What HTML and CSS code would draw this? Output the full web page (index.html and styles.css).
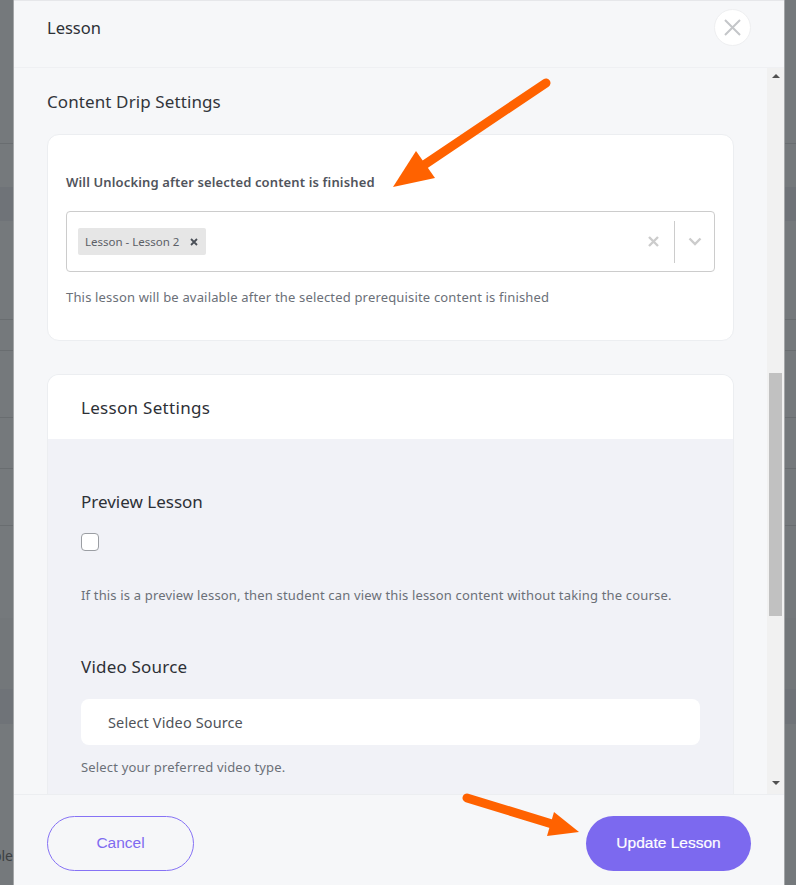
FILE: index.html
```html
<!DOCTYPE html>
<html lang="en">

<head>
	<meta charset="UTF-8">
	<title>Lesson</title>
	<link rel="stylesheet" href="styles.css">
</head>

<body>
	<!-- page behind the dialog, only the edges show -->
	<div class="backdrop">
		<div class="stripe stripe-a"></div>
		<div class="stripe stripe-b"></div>
		<div class="stripe stripe-c"></div>
		<div class="stripe stripe-d"></div>
		<div class="stripe stripe-e"></div>
		<div class="stripe stripe-f"></div>
		<div class="stripe stripe-g"></div>
		<div class="stripe stripe-h"></div>
		<div class="stripe stripe-i"></div>
		<div class="stripe stripe-j"></div>
		<div class="stripe stripe-k"></div>
		<div class="stripe stripe-l"><span class="cut-text">ble</span></div>
	</div>

	<div class="modal">
		<header class="modal-header">
			<h2>Lesson</h2>
			<button class="close-button" aria-label="Close">
				<svg width="19" height="19" viewBox="0 0 19 19"><path d="M2 2L17 17M17 2L2 17" stroke="#c4c6c9" stroke-width="2" fill="none" /></svg>
			</button>
		</header>

		<div class="modal-middle">
			<div class="modal-body">
				<h3 class="section-title">Content Drip Settings</h3>
				<div class="drip-card">
					<label class="drip-label">Will Unlocking after selected content is finished</label>
					<div class="multi-select">
						<span class="tag">Lesson - Lesson 2
							<svg width="8" height="8" viewBox="0 0 8 8"><path d="M1 1L7 7M7 1L1 7" stroke="#4a4f57" stroke-width="1.8" fill="none" /></svg>
						</span>
						<span class="select-clear">
							<svg width="11" height="11" viewBox="0 0 11 11"><path d="M1 1L10 10M10 1L1 10" stroke="#cccccc" stroke-width="2.4" fill="none" /></svg>
						</span>
						<span class="select-sep"></span>
						<span class="select-arrow">
							<svg width="14" height="9" viewBox="0 0 14 9"><path d="M1.5 1.5L7 7L12.5 1.5" stroke="#cccccc" stroke-width="2.4" fill="none" /></svg>
						</span>
					</div>
					<p class="help-text">This lesson will be available after the selected prerequisite content is finished</p>
				</div>

				<div class="settings-card">
					<div class="settings-head">Lesson Settings</div>
					<div class="settings-body">
						<h4 class="field-title">Preview Lesson</h4>
						<span class="check-box"></span>
						<p class="help-text preview-help">If this is a preview lesson, then student can view this lesson content without taking the course.</p>
						<h4 class="field-title video-title">Video Source</h4>
						<div class="video-select">Select Video Source</div>
						<p class="help-text video-help">Select your preferred video type.</p>
					</div>
				</div>
			</div>

			<div class="scrollbar">
				<span class="scroll-up"></span>
				<span class="scroll-thumb"></span>
				<span class="scroll-down"></span>
			</div>
		</div>

		<footer class="modal-footer">
			<button class="cancel-button">Cancel</button>
			<button class="update-button">Update Lesson</button>
		</footer>
	</div>

	<!-- annotation arrows drawn on top of the screenshot -->
	<svg class="arrows" width="796" height="885" viewBox="0 0 796 885">
		<path d="M546 83L424 165" stroke="#ff6200" stroke-width="9" stroke-linecap="round" fill="none" />
		<polygon points="416,151 435,178 393,187" fill="#ff6200" />
		<path d="M467 798L552 824" stroke="#ff6200" stroke-width="9" stroke-linecap="round" fill="none" />
		<polygon points="554,812 547,836 579,832" fill="#ff6200" />
	</svg>
</body>

</html>
```

FILE: styles.css
```css
body {
	margin: 0;
	width: 796px;
	height: 885px;
	overflow: hidden;
	position: relative;
	background: #75797c;
	font-family: "Noto Sans", sans-serif;
}

h2,
h3,
h4,
p {
	margin: 0;
	font-weight: 400;
}

button {
	padding: 0;
	cursor: pointer;
}

/* backdrop */
.backdrop {
	display: flex;
	flex-direction: column;
}

.stripe {
	border-bottom: 1px solid #696d70;
	box-sizing: border-box;
}

.stripe-a { height: 144px; }
.stripe-b { height: 43px; border-bottom: none; }
.stripe-c { height: 34px; background: #6f7378; border-bottom: none; }
.stripe-d { height: 99px; }
.stripe-e { height: 31px; }
.stripe-f { height: 67px; }
.stripe-g { height: 51px; }
.stripe-h { height: 57px; }
.stripe-i { height: 92px; border-bottom: none; }
.stripe-j { height: 71px; border-bottom: none; background: #73777a; }
.stripe-k { height: 35px; background: #6f7378; border-bottom: none; }
.stripe-l { height: 161px; border-bottom: none; }

.cut-text {
	display: flex;
	justify-content: flex-end;
	width: 13px;
	margin-top: 122px;
	font-size: 14px;
	line-height: 20px;
	color: #3c4043;
}

/* dialog */
.modal {
	position: absolute;
	top: 0;
	left: 14px;
	width: 770px;
	height: 885px;
	display: flex;
	flex-direction: column;
	background: #f6f7f9;
	box-shadow: -1px 0 0 #a4a6a8, 1px 0 0 #a4a6a8;
}

.modal-header {
	height: 68px;
	box-sizing: border-box;
	flex-shrink: 0;
	display: flex;
	justify-content: space-between;
	align-items: center;
	padding: 0 33px 13px;
	border-top: 1px solid #e6e7ea;
	border-bottom: 1px solid #eff0f3;
}

.modal-header h2 {
	font-size: 16.5px;
	color: #2d3036;
}

.close-button {
	width: 37px;
	height: 37px;
	border-radius: 50%;
	border: 1px solid #eeeff1;
	background: #ffffff;
	display: flex;
	align-items: center;
	justify-content: center;
}

.modal-middle {
	flex: 1;
	display: flex;
	min-height: 0;
}

.modal-body {
	flex: 1;
	overflow: hidden;
	padding: 22px 33px 0;
}

.section-title {
	font-size: 17px;
	line-height: 24px;
	letter-spacing: 0.1px;
	color: #32353b;
}

.drip-card {
	margin-top: 20px;
	height: 207px;
	box-sizing: border-box;
	padding: 37px 18px 0;
	background: #ffffff;
	border: 1px solid #eceef1;
	border-radius: 12px;
}

.drip-label {
	display: block;
	font-size: 13px;
	line-height: 20px;
	letter-spacing: 0.14px;
	font-weight: 600;
	color: #50545c;
}

.multi-select {
	margin-top: 19px;
	height: 61px;
	box-sizing: border-box;
	display: flex;
	align-items: center;
	padding: 0 11px;
	border: 1px solid #cccccc;
	border-radius: 4px;
}

.tag {
	display: flex;
	align-items: center;
	gap: 11px;
	height: 27px;
	padding: 0 8px 0 7px;
	background: #e6e6e6;
	border-radius: 2px;
	font-size: 11.5px;
	color: #5c6066;
}

.select-clear {
	margin-left: auto;
	display: flex;
}

.select-sep {
	width: 1px;
	height: 42px;
	margin: 0 13px 0 15px;
	background: #cccccc;
}

.select-arrow {
	display: flex;
	margin-right: 1px;
}

.help-text {
	font-size: 13px;
	line-height: 20px;
	letter-spacing: 0.17px;
	color: #6b7078;
}

.multi-select + .help-text {
	margin-top: 15px;
}

.settings-card {
	margin-top: 33px;
	border: 1px solid #eceef1;
	border-bottom: none;
	border-radius: 12px 12px 0 0;
	overflow: hidden;
}

.settings-head {
	height: 64px;
	box-sizing: border-box;
	padding: 21px 33px 0;
	background: #ffffff;
	font-size: 17px;
	line-height: 24px;
	letter-spacing: 0.3px;
	color: #2d3036;
}

.settings-body {
	padding: 51px 33px 40px;
	background: #f1f2f7;
}

.field-title {
	font-size: 17px;
	line-height: 24px;
	color: #2d3036;
}

.video-title {
	letter-spacing: 0.2px;
}

.check-box {
	display: block;
	width: 18px;
	height: 18px;
	margin-top: 19px;
	box-sizing: border-box;
	background: #ffffff;
	border: 1px solid #9b9ea3;
	border-radius: 4px;
}

.preview-help {
	margin-top: 34px;
	margin-bottom: 50px;
}

.video-select {
	margin-top: 20px;
	height: 46px;
	box-sizing: border-box;
	padding: 0 27px;
	display: flex;
	align-items: center;
	background: #ffffff;
	border-radius: 8px;
	font-size: 14.5px;
	letter-spacing: 0.12px;
	color: #4f5359;
}

.video-help {
	margin-top: 12px;
}

/* scrollbar */
.scrollbar {
	width: 17px;
	flex-shrink: 0;
	box-sizing: border-box;
	display: flex;
	flex-direction: column;
	align-items: center;
	background: #f1f1f1;
	padding-top: 6px;
}

.scroll-up {
	width: 0;
	height: 0;
	border-left: 4px solid transparent;
	border-right: 4px solid transparent;
	border-bottom: 4px solid #505050;
}

.scroll-thumb {
	width: 13px;
	height: 243px;
	margin-top: 295px;
	background: #c1c1c1;
}

.scroll-down {
	width: 0;
	height: 0;
	margin-top: 165px;
	border-left: 4px solid transparent;
	border-right: 4px solid transparent;
	border-top: 4px solid #505050;
}

/* footer */
.modal-footer {
	height: 91px;
	box-sizing: border-box;
	flex-shrink: 0;
	display: flex;
	justify-content: space-between;
	padding: 21px 33px 0;
	border-top: 1px solid #eceef1;
}

.cancel-button,
.update-button {
	height: 55px;
	padding-bottom: 2px;
	border-radius: 28px;
	font-family: "Liberation Sans", Arial, sans-serif;
	font-size: 15.5px;
}

.cancel-button {
	width: 147px;
	background: transparent;
	border: 1px solid #8672f5;
	color: #7f6bf0;
}

.update-button {
	width: 165px;
	background: #7c69ef;
	border: none;
	color: #ffffff;
	-webkit-text-stroke: 0.2px #ffffff;
}

/* annotations */
.arrows {
	position: absolute;
	top: 0;
	left: 0;
}
```
